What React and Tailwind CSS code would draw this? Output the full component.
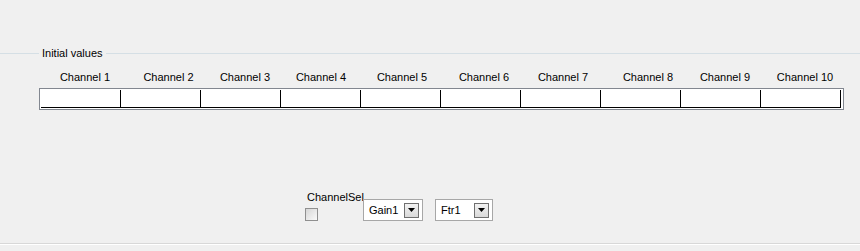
import React from "react";

const headers = [
  { label: "Channel 1", pad: "pl-[8px]" },
  { label: "Channel 2", pad: "pl-[15px]" },
  { label: "Channel 3", pad: "pl-[8px]" },
  { label: "Channel 4", pad: "pl-0" },
  { label: "Channel 5", pad: "pl-[2px]" },
  { label: "Channel 6", pad: "pl-[6px]" },
  { label: "Channel 7", pad: "pl-[4px]" },
  { label: "Channel 8", pad: "pl-[14px]" },
  { label: "Channel 9", pad: "pl-[8px]" },
  { label: "Channel 10", pad: "pl-[8px]" },
];

const ComboBox = ({ value, width }) => (
  <div
    className={`flex items-center justify-between h-[22px] ${width} bg-white border border-[#a7a7a7] pl-[5px] pr-[3px]`}
  >
    <span className="leading-[14px]">{value}</span>
    <div className="flex items-center justify-center w-[15px] h-[15px] border border-[#6f6f6f] bg-gradient-to-b from-[#f2f2f2] to-[#d9d9d9]">
      <svg width="7" height="4" viewBox="0 0 7 4">
        <path d="M0 0h7L3.5 4z" fill="#000" />
      </svg>
    </div>
  </div>
);

const App = () => {
  return (
    <div className="w-[860px] h-[251px] bg-[#f0f0f0] flex flex-col overflow-hidden text-[11px] text-black font-['Liberation_Sans',Arial,sans-serif]">
      <fieldset className="mt-[46px] border-0 border-t border-[#d5dfe5]">
        <legend className="ml-[39px] px-[3px] leading-[14px]">Initial values</legend>
        <div className="flex ml-[41px] mt-[10px] h-[14px]">
          {headers.map((h) => (
            <div key={h.label} className={`w-[80px] text-center leading-[14px] ${h.pad}`}>
              {h.label}
            </div>
          ))}
        </div>
        <div className="ml-[39px] mt-[4px] w-[805px] h-[22px] border border-[#828790] bg-white p-px flex">
          {headers.map((h) => (
            <div key={h.label} className="w-[80px] h-[18px] border-r border-b border-black" />
          ))}
        </div>
      </fieldset>

      <div className="flex items-start ml-[305px] mt-[80px]">
        <div className="w-[58px] flex flex-col">
          <span className="leading-[14px] pl-[2px] whitespace-nowrap">ChannelSel</span>
          <div className="mt-[4px] w-[13px] h-[13px] border border-[#8f8f8f] bg-gradient-to-br from-[#d6d6d6] to-[#fafafa]" />
        </div>
        <div className="mt-[9px] flex gap-[12px]">
          <ComboBox value="Gain1" width="w-[60px]" />
          <ComboBox value="Ftr1" width="w-[58px]" />
        </div>
      </div>

      <div className="mt-[22px] border-t border-[#d8d8d8] border-b border-b-white" />
    </div>
  );
};

export default App;
